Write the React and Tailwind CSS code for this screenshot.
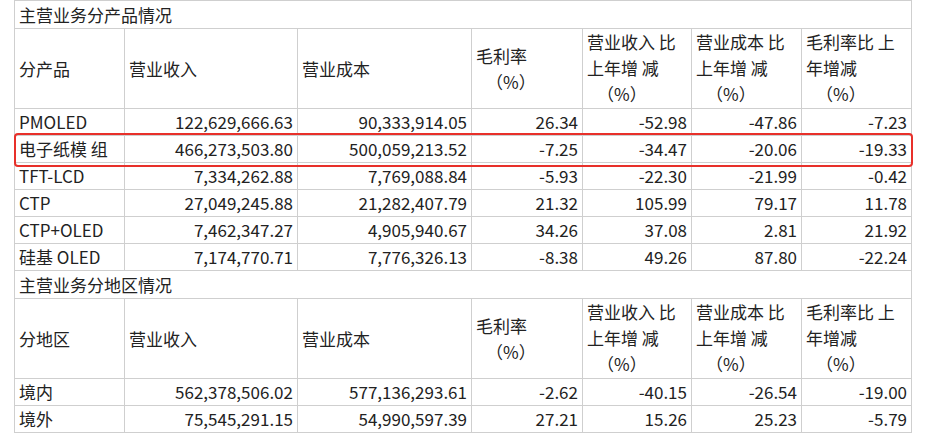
import React from "react";

const cols = [110, 173, 174, 111, 109, 110, 110];

const products = [
  ["PMOLED", "122,629,666.63", "90,333,914.05", "26.34", "-52.98", "-47.86", "-7.23"],
  ["电子纸模 组", "466,273,503.80", "500,059,213.52", "-7.25", "-34.47", "-20.06", "-19.33"],
  ["TFT-LCD", "7,334,262.88", "7,769,088.84", "-5.93", "-22.30", "-21.99", "-0.42"],
  ["CTP", "27,049,245.88", "21,282,407.79", "21.32", "105.99", "79.17", "11.78"],
  ["CTP+OLED", "7,462,347.27", "4,905,940.67", "34.26", "37.08", "2.81", "21.92"],
  ["硅基 OLED", "7,174,770.71", "7,776,326.13", "-8.38", "49.26", "87.80", "-22.24"],
];

const regions = [
  ["境内", "562,378,506.02", "577,136,293.61", "-2.62", "-40.15", "-26.54", "-19.00"],
  ["境外", "75,545,291.15", "54,990,597.39", "27.21", "15.26", "25.23", "-5.79"],
];

const td = "border border-[#cfcfcf] px-[4px] py-0 leading-[24px]";
const th = "border border-[#cfcfcf] px-[4px] py-0 leading-[26px]";

function Header({ first }) {
  return (
    <tr className="h-[80px]">
      <td className={th}>{first}</td>
      <td className={th}>营业收入</td>
      <td className={th}>营业成本</td>
      <td className={th}>
        <div>毛利率</div>
        <div className="pl-[10px]">（%）</div>
      </td>
      <td className={th + " align-top"}>
        <div>营业收入 比</div>
        <div>上年增 减</div>
        <div className="pl-[10px]">（%）</div>
      </td>
      <td className={th + " align-top"}>
        <div>营业成本 比</div>
        <div>上年增 减</div>
        <div className="pl-[10px]">（%）</div>
      </td>
      <td className={th + " align-top"}>
        <div>毛利率比 上</div>
        <div>年增减</div>
        <div className="pl-[10px]">（%）</div>
      </td>
    </tr>
  );
}

function Rows({ data }) {
  return data.map((r) => (
    <tr key={r[0]} className="h-[27px]">
      {r.map((c, i) => (
        <td key={i} className={td + (i === 0 ? "" : " text-right")}>
          {c}
        </td>
      ))}
    </tr>
  ));
}

export default function App() {
  return (
    <div className="w-[927px] h-[435px] overflow-hidden bg-white">
      <div
        className="relative ml-[14px] text-[17px] text-[#222]"
        style={{ fontFamily: '"Noto Sans CJK SC", "Noto Sans", sans-serif' }}
      >
        <table className="border-collapse table-fixed w-[897px]">
          <colgroup>
            {cols.map((w, i) => (
              <col key={i} style={{ width: w }} />
            ))}
          </colgroup>
          <tbody>
            <tr className="h-[28px]">
              <td colSpan={7} className={td}>主营业务分产品情况</td>
            </tr>
            <Header first="分产品" />
            <Rows data={products} />
            <tr className="h-[28px]">
              <td colSpan={7} className={td}>主营业务分地区情况</td>
            </tr>
            <Header first="分地区" />
            <Rows data={regions} />
          </tbody>
        </table>
        <div className="absolute left-0 top-[133px] w-[899px] h-[34px] border-[2.5px] border-[#e8302a] rounded-[4px] pointer-events-none" />
      </div>
    </div>
  );
}
